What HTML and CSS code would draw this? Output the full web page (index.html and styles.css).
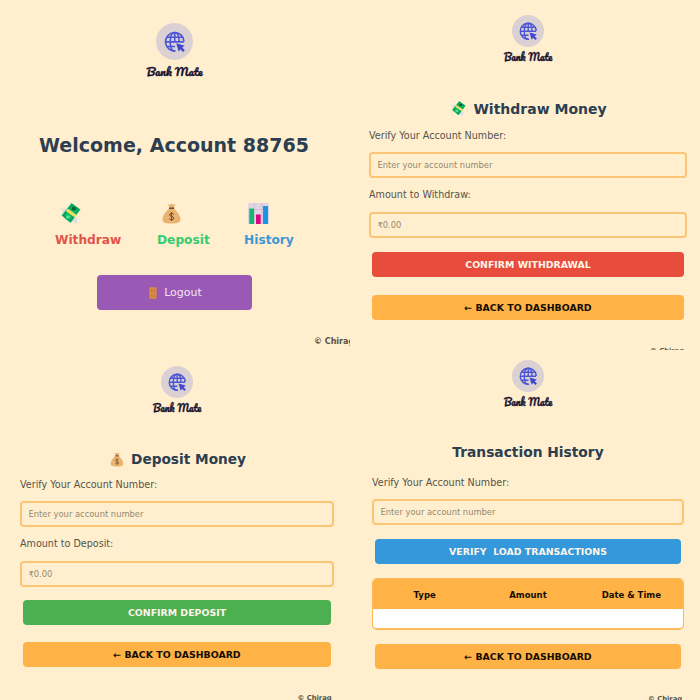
FILE: index.html
```
<!DOCTYPE html>
<html lang="en">
<head>
<meta charset="utf-8">
<title>Bank Mate</title>
<link rel="stylesheet" href="styles.css">
</head>
<body>
<svg class="defs" width="0" height="0" aria-hidden="true">
  <symbol id="globe" viewBox="0 0 32 32">
    <circle cx="16" cy="16" r="16" fill="#dbd1d3"/>
    <g fill="none" stroke="#4a55d6" stroke-width="1.4">
      <path d="M24.200 16A8 8 0 1 0 17 24.200"/>
      <path d="M20 16C20 11 18.300 8.200 16.200 8.200S12.300 11 12.300 16.200S14 24.300 16.200 24.300"/>
      <path d="M16.200 8.200V17M9 12.300H23.400M8.200 16.300H24M9 20.300H16.500"/>
    </g>
    <path d="M17.500 17.600L24.800 19.600L22.600 21.200L24.900 23.500L23.400 25L21.100 22.700L19.700 24.800Z" fill="#4047d2"/>
  </symbol>
  <symbol id="cash" viewBox="0 0 21 21">
    <path d="M0 5L5.500 6L8 10L2 9.500L3 7.800ZM12 14L17.500 15.500L16.500 21L14.500 18.800L12.500 19.500Z" fill="#d9dce4"/>
    <path d="M11.500 0L20.500 6.500L10.500 20L1.500 12.500Z" fill="#0eb968"/>
    <path d="M11.900 2L18.500 6.700L10.300 17.900L3.600 12.400Z" fill="none" stroke="#067c4a" stroke-width=".8"/>
    <ellipse cx="13.700" cy="5.700" rx="2.300" ry="1.900" fill="#07613d"/>
    <ellipse cx="8" cy="14" rx="2" ry="1.700" fill="#5cdd9c"/>
    <path d="M7.500 5.500L16.800 12L14.900 14.500L5.700 7.900Z" fill="#eddf61"/>
  </symbol>
  <symbol id="bag" viewBox="0 0 20 21">
    <path d="M6.500 1L8.500 1.800L10 .5L11.800 1.800L14 1L12.300 5H8Z" fill="#e7b372"/>
    <path d="M7.500 5.500C5 8 1 12 1 16.300C1 19.500 3 20.600 10 20.600S19 19.500 19 16.300C19 12 15 8 12.600 5.500Z" fill="#e9b470"/>
    <path d="M7.500 4.500H12.600V6H7.500Z" fill="#754534"/>
    <path d="M12.200 11.300C11.400 10 8 10.100 8 11.900C8 13.900 12.300 13.100 12.300 15.300C12.300 17.200 8.600 17.200 7.600 15.700M10.100 9V18" fill="none" stroke="#70482f" stroke-width="1"/>
  </symbol>
  <symbol id="chart" viewBox="0 0 21 21">
    <rect width="21" height="21" rx="1.500" fill="#e2d5e3"/>
    <path d="M0 6.500H21M0 13H21M6.300 0V21M14 0V21" stroke="#c9b6d1" stroke-width=".8"/>
    <rect x="1.300" y="5.500" width="4.700" height="15.500" fill="#0fb96c"/>
    <rect x="8" y="11.500" width="4.700" height="9.500" fill="#d6087f"/>
    <rect x="15" y="3" width="5" height="18" fill="#1797e4"/>
  </symbol>
  <symbol id="door" viewBox="0 0 8 12">
    <rect width="7.300" height="11.500" x=".3" y=".2" rx=".5" fill="#d98c3d"/>
    <path d="M2 2H3.500V5H2ZM4.600 2H6V5H4.600ZM2 7H3.500V10H2ZM4.600 7H6V10H4.600Z" fill="#c67b45"/>
  </symbol>
</svg>

<main class="board">
  <section class="panel dashboard">
    <div class="brand"><svg class="mark"><use href="#globe"/></svg><span class="wordmark">Bank Mate</span></div>
    <h1 class="title">Welcome, Account 88765</h1>
    <nav class="actions">
      <a class="action withdraw"><svg><use href="#cash"/></svg>Withdraw</a>
      <a class="action deposit"><svg><use href="#bag"/></svg>Deposit</a>
      <a class="action history"><svg><use href="#chart"/></svg>History</a>
    </nav>
    <button class="logout"><svg><use href="#door"/></svg>Logout</button>
    <footer class="credit">© Chirag</footer>
  </section>

  <section class="panel form withdrawal">
    <div class="brand"><svg class="mark"><use href="#globe"/></svg><span class="wordmark">Bank Mate</span></div>
    <h2 class="title"><svg><use href="#cash"/></svg>Withdraw Money</h2>
    <label>Verify Your Account Number:</label>
    <input placeholder="Enter your account number">
    <label>Amount to Withdraw:</label>
    <input placeholder="₹0.00">
    <button class="btn red">CONFIRM WITHDRAWAL</button>
    <button class="btn back">← BACK TO DASHBOARD</button>
    <footer class="credit">© Chirag</footer>
  </section>

  <section class="panel form depositing">
    <div class="brand"><svg class="mark"><use href="#globe"/></svg><span class="wordmark">Bank Mate</span></div>
    <h2 class="title"><svg><use href="#bag"/></svg>Deposit Money</h2>
    <label>Verify Your Account Number:</label>
    <input placeholder="Enter your account number">
    <label>Amount to Deposit:</label>
    <input placeholder="₹0.00">
    <button class="btn green">CONFIRM DEPOSIT</button>
    <button class="btn back">← BACK TO DASHBOARD</button>
    <footer class="credit">© Chirag</footer>
  </section>

  <section class="panel form transactions">
    <div class="brand"><svg class="mark"><use href="#globe"/></svg><span class="wordmark">Bank Mate</span></div>
    <h2 class="title">Transaction History</h2>
    <label>Verify Your Account Number:</label>
    <input placeholder="Enter your account number">
    <button class="btn blue">VERIFY&nbsp; LOAD TRANSACTIONS</button>
    <div class="table"><div class="thead"><span>Type</span><span>Amount</span><span>Date &amp; Time</span></div></div>
    <button class="btn back">← BACK TO DASHBOARD</button>
    <footer class="credit">© Chirag</footer>
  </section>
</main>
</body>
</html>
```
FILE: styles.css
```
* { box-sizing: border-box; }

body {
  margin: 0;
  background: #ffefcf;
  font-family: "DejaVu Sans", Verdana, sans-serif;
  color: #2c3e50;
}

.defs { display: none; }

.board {
  display: grid;
  grid-template: 350px 350px / 350px 350px;
  width: 700px;
  height: 700px;
  overflow: hidden;
}

.panel {
  display: flex;
  flex-direction: column;
  min-width: 0;
  overflow: hidden;
}

.panel > * { flex: none; }

.brand {
  display: flex;
  flex-direction: column;
  align-items: center;
  gap: 1px;
}

.mark { width: 32px; height: 32px; }

.wordmark {
  height: 16px;
  font: normal 9.6px/17px "Pacifico", cursive;
  -webkit-text-stroke: .3px #17102e;
  color: #17102e;
  white-space: nowrap;
}

.title {
  display: flex;
  justify-content: center;
  align-items: center;
  margin: 0;
  height: 20px;
  font-size: 14px;
  line-height: 20px;
  font-weight: bold;
  white-space: nowrap;
}

.title svg { width: 15px; height: 15px; margin-right: 7px; }

button, input { font-family: inherit; border: 0; padding: 0; }

.credit {
  height: 10px;
  font-size: 6.8px;
  line-height: 10px;
  font-weight: bold;
  color: #555147;
  white-space: nowrap;
}

/* Dashboard */
.dashboard { padding-top: 22.5px; }
.dashboard .brand { gap: 2px; padding-right: 1px; }
.dashboard .mark { width: 37px; height: 37px; }
.dashboard .wordmark { height: 18px; font-size: 11.2px; line-height: 18px; }
.dashboard .title { height: 24px; margin: 53px 2px 0 0; font-size: 19.050px; line-height: 24px; }

.actions {
  display: grid;
  grid-template-columns: 102px 87px auto;
  margin: 46px 0 0 55px;
}

.action {
  display: flex;
  flex-direction: column;
  gap: 8px;
  font-size: 12.2px;
  line-height: 16px;
  font-weight: bold;
}

.action svg { width: 21px; height: 21px; margin-left: 5px; }
.withdraw { color: #e2544a; }
.deposit { color: #35cb6f; }
.deposit svg { margin-left: 4px; }
.history { color: #3b97d6; }
.history svg { margin-left: 4px; }

.logout {
  display: flex;
  align-items: center;
  justify-content: center;
  gap: 7px;
  width: 155px;
  height: 35px;
  margin: 27px 0 0 97px;
  padding: 1px 0 0 2px;
  border-radius: 4px;
  background: #9b59b6;
  color: #f3e5f3;
  font-size: 11px;
}

.logout svg { width: 8px; height: 12px; }
.dashboard .credit { margin: 27.500px 0 0 314px; font-size: 8px; }

/* Forms */
.form label {
  height: 16px;
  font-size: 9.6px;
  line-height: 16px;
  color: #56534a;
}

.form input {
  height: 26px;
  margin: 8.500px 0 9px;
  padding: 0 6.500px;
  border: 2px solid #fcc475;
  border-radius: 4px;
  background: transparent;
  font-size: 8.35px;
}

.form input::placeholder { color: #94896f; opacity: 1; }

.btn {
  height: 25px;
  margin: 0 3px;
  border-radius: 4px;
  font-size: 9.4px;
  font-weight: bold;
  color: #fff5ea;
}

.red { background: #e84c3d; }
.green { background: #4caf50; }
.blue { background: #3498db; }
.back { background: #ffb347; color: #150d02; }

.withdrawal { padding: 14.500px 13px 0 19px; }
.withdrawal .title { margin: 35px 0 9px; font-size: 14px; padding-left: 2px; }
.withdrawal .red { margin-top: 5.500px; }
.withdrawal .back { margin-top: 17.500px; }
.withdrawal .credit { margin: 26px 0 0 281px; }

.depositing { padding: 15.500px 16px 0 20px; }
.depositing .title { margin: 34.500px 0 7.800px; font-size: 13.7px; }
.depositing .title svg { width: 14px; margin-left: 2px; }
.depositing .green { margin-top: 4.700px; }
.depositing .back { margin-top: 17px; }
.depositing .credit { margin: 25.500px 0 0 277.500px; }

.transactions { padding: 10px 16px 0 22px; }
.transactions .title { margin: 33px 0 12.800px; font-size: 13.8px; }
.transactions .blue { margin-top: 5px; }
.transactions .back { margin-top: 14.500px; }
.transactions .credit { margin: 24.500px 0 0 276px; }

.table {
  height: 52px;
  margin-top: 13.500px;
  border: 1px solid #fdb95a;
  border-bottom-width: 2px;
  border-radius: 5px;
  background: #fff;
  overflow: hidden;
}

.thead {
  display: grid;
  grid-template-columns: repeat(3, 1fr);
  height: 30px;
  background: #ffb347;
  color: #150d02;
  font-size: 8.5px;
  line-height: 32px;
  font-weight: bold;
  text-align: center;
}
```
